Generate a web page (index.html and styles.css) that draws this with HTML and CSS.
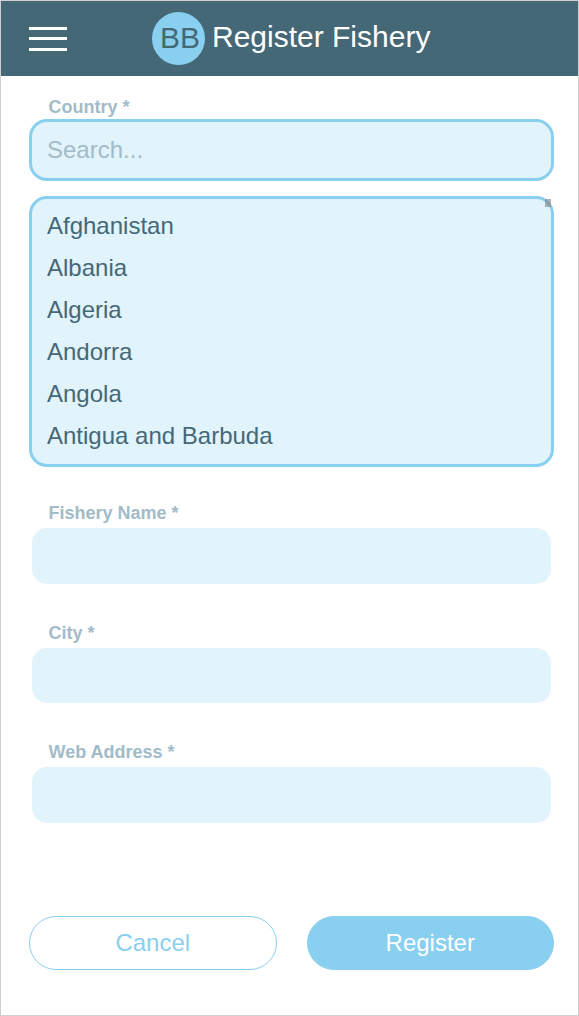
FILE: index.html
```html
<!DOCTYPE html>
<html lang="en">
<head>
<meta charset="utf-8">
<title>Register Fishery</title>
<link rel="stylesheet" href="styles.css">
</head>
<body>
<div class="screen">
  <header class="header">
    <button class="menu" type="button" aria-label="Menu">
      <svg width="38" height="24" viewBox="0 0 38 24"><path d="M0 0h38v3H0zM0 10h38v3H0zM0 21h38v3H0z" fill="#fff"/></svg>
    </button>
    <div class="brand">
      <span class="logo">BB</span>
      <h1 class="title">Register Fishery</h1>
    </div>
  </header>
  <form class="form">
    <div class="field">
      <label class="label" for="country">Country *</label>
      <input class="input input-active" id="country" type="text" placeholder="Search...">
    </div>
    <ul class="options">
      <li class="option">Afghanistan</li>
      <li class="option">Albania</li>
      <li class="option">Algeria</li>
      <li class="option">Andorra</li>
      <li class="option">Angola</li>
      <li class="option">Antigua and Barbuda</li>
      <li class="scroll-thumb" aria-hidden="true"></li>
    </ul>
    <div class="field spaced">
      <label class="label" for="name">Fishery Name *</label>
      <input class="input" id="name" type="text">
    </div>
    <div class="field spaced">
      <label class="label" for="city">City *</label>
      <input class="input input-short" id="city" type="text">
    </div>
    <div class="field spaced">
      <label class="label" for="web">Web Address *</label>
      <input class="input" id="web" type="text">
    </div>
    <div class="actions">
      <button class="button cancel" type="button">Cancel</button>
      <button class="button register" type="button">Register</button>
    </div>
  </form>
</div>
</body>
</html>
```
FILE: styles.css
```css
* {
  box-sizing: border-box;
}

body {
  margin: 0;
  background: #fff;
  color: #456877;
  font-family: "Liberation Sans", Arial, sans-serif;
}

.screen {
  height: 1016px;
  border: 1px solid #d0d0d0;
  overflow: hidden;
}

.header {
  display: flex;
  align-items: center;
  height: 75px;
  padding-left: 28px;
  background: #456877;
}

.menu {
  display: flex;
  margin: 0 85px 0 0;
  padding: 0;
  border: 0;
  background: none;
}

.brand {
  display: flex;
  align-items: center;
  gap: 7px;
}

.logo {
  width: 53px;
  height: 53px;
  padding-left: 3px;
  border-radius: 50%;
  background: #89cff0;
  font-size: 30px;
  line-height: 51px;
  text-align: center;
}

.title {
  margin: 0;
  padding-bottom: 4px;
  color: #fff;
  font-size: 30px;
  font-weight: 400;
  line-height: 34px;
}

.form {
  padding: 21px 24px 0 28px;
}

.field {
  display: flex;
  flex-direction: column;
  gap: 2px;
}

.spaced {
  margin-top: 36px;
}

.label {
  padding-left: 19.5px;
  color: #a2bbc8;
  font-size: 18px;
  font-weight: 700;
  line-height: 20px;
}

.input {
  width: 100%;
  height: 62px;
  padding: 0 15px;
  border: 3px solid transparent;
  border-radius: 18px;
  outline: 0;
  background: #e1f3fb;
  background-clip: padding-box;
  color: #456877;
  font: 24px "Liberation Sans", Arial, sans-serif;
}

.input-active {
  border-color: #89cff0;
}

.input-short {
  height: 61px;
}

.input::placeholder {
  color: #a2bbc8;
  opacity: 1;
}

.options {
  position: relative;
  height: 271px;
  margin: 15px 0 0;
  padding: 6px 15px;
  border: 3px solid #89cff0;
  border-radius: 18px;
  background: #e1f3fb;
  list-style: none;
}

.option {
  font-size: 24px;
  line-height: 42px;
}

.scroll-thumb {
  position: absolute;
  top: 0;
  right: 0;
  width: 6px;
  height: 8px;
  background: rgba(128, 128, 128, 0.6);
}

.actions {
  display: flex;
  gap: 30px;
  margin-top: 90px;
}

.button {
  flex: 1;
  height: 54px;
  padding: 0;
  border: 1px solid #89cff0;
  border-radius: 27px;
  font: 24px "Liberation Sans", Arial, sans-serif;
}

.cancel {
  background: #fff;
  color: #89cff0;
}

.register {
  background: #89cff0;
  color: #fff;
}
```
